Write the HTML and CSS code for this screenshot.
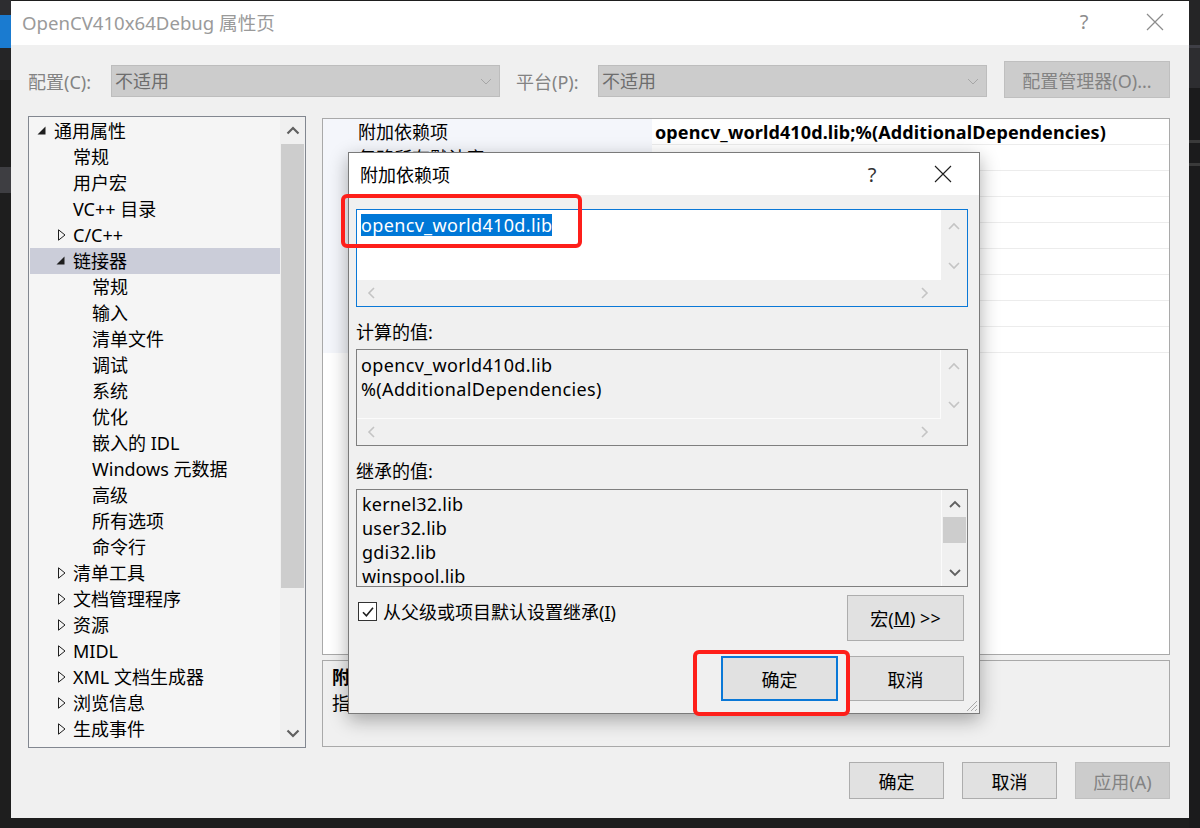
FILE: index.html
```html
<!DOCTYPE html>
<html lang="zh-CN">
<head>
<meta charset="utf-8">
<title>OpenCV410x64Debug 属性页</title>
<link rel="stylesheet" href="styles.css">
</head>
<body>
<div class="screen">
  <div class="edge-left">
    <div class="el-a"></div><div class="el-blue"></div><div class="el-b"></div><div class="el-c"></div><div class="el-grey"></div><div class="el-d"></div>
  </div>

  <div class="window">
    <div class="titlebar">
      <span class="title">OpenCV410x64Debug 属性页</span>
      <span class="tb-help">?</span>
      <span class="tb-close"><svg width="18" height="18" viewBox="0 0 18 18"><path d="M1 1L17 17M17 1L1 17" stroke="#8c8c8c" stroke-width="1.2" fill="none"/></svg></span>
    </div>

    <div class="wbody">
      <div class="config-row">
        <span class="cfg-label">配置(C):</span>
        <div class="combo"><span>不适用</span><svg class="combo-chev" width="12" height="7" viewBox="0 0 12 7"><path d="M1 1L6 6L11 1" stroke="#a6a6a6" stroke-width="1" fill="none"/></svg></div>
        <span class="cfg-label plat">平台(P):</span>
        <div class="combo"><span>不适用</span><svg class="combo-chev" width="12" height="7" viewBox="0 0 12 7"><path d="M1 1L6 6L11 1" stroke="#a6a6a6" stroke-width="1" fill="none"/></svg></div>
        <div class="btn btn-disabled cfg-mgr">配置管理器(O)...</div>
      </div>

      <div class="main">
        <div class="tree">
          <div class="tree-list">
            <div class="row l0"><span class="exp"><svg width="9" height="9" viewBox="0 0 9 9"><path d="M8.5 0.5V8.5H0.5Z" fill="#1e1e1e"/></svg></span>通用属性</div>
            <div class="row l1"><span class="noicon"></span>常规</div>
            <div class="row l1"><span class="noicon"></span>用户宏</div>
            <div class="row l1"><span class="noicon"></span>VC++ 目录</div>
            <div class="row l1"><span class="col"><svg width="8" height="12" viewBox="0 0 8 12"><path d="M0.5 0.8L7 6L0.5 11.2Z" fill="none" stroke="#1e1e1e" stroke-width="1"/></svg></span>C/C++</div>
            <div class="row l1 sel"><span class="exp"><svg width="9" height="9" viewBox="0 0 9 9"><path d="M8.5 0.5V8.5H0.5Z" fill="#1e1e1e"/></svg></span>链接器</div>
            <div class="row l2"><span class="noicon"></span>常规</div>
            <div class="row l2"><span class="noicon"></span>输入</div>
            <div class="row l2"><span class="noicon"></span>清单文件</div>
            <div class="row l2"><span class="noicon"></span>调试</div>
            <div class="row l2"><span class="noicon"></span>系统</div>
            <div class="row l2"><span class="noicon"></span>优化</div>
            <div class="row l2"><span class="noicon"></span>嵌入的 IDL</div>
            <div class="row l2"><span class="noicon"></span>Windows 元数据</div>
            <div class="row l2"><span class="noicon"></span>高级</div>
            <div class="row l2"><span class="noicon"></span>所有选项</div>
            <div class="row l2"><span class="noicon"></span>命令行</div>
            <div class="row l1"><span class="col"><svg width="8" height="12" viewBox="0 0 8 12"><path d="M0.5 0.8L7 6L0.5 11.2Z" fill="none" stroke="#1e1e1e" stroke-width="1"/></svg></span>清单工具</div>
            <div class="row l1"><span class="col"><svg width="8" height="12" viewBox="0 0 8 12"><path d="M0.5 0.8L7 6L0.5 11.2Z" fill="none" stroke="#1e1e1e" stroke-width="1"/></svg></span>文档管理程序</div>
            <div class="row l1"><span class="col"><svg width="8" height="12" viewBox="0 0 8 12"><path d="M0.5 0.8L7 6L0.5 11.2Z" fill="none" stroke="#1e1e1e" stroke-width="1"/></svg></span>资源</div>
            <div class="row l1"><span class="col"><svg width="8" height="12" viewBox="0 0 8 12"><path d="M0.5 0.8L7 6L0.5 11.2Z" fill="none" stroke="#1e1e1e" stroke-width="1"/></svg></span>MIDL</div>
            <div class="row l1"><span class="col"><svg width="8" height="12" viewBox="0 0 8 12"><path d="M0.5 0.8L7 6L0.5 11.2Z" fill="none" stroke="#1e1e1e" stroke-width="1"/></svg></span>XML 文档生成器</div>
            <div class="row l1"><span class="col"><svg width="8" height="12" viewBox="0 0 8 12"><path d="M0.5 0.8L7 6L0.5 11.2Z" fill="none" stroke="#1e1e1e" stroke-width="1"/></svg></span>浏览信息</div>
            <div class="row l1"><span class="col"><svg width="8" height="12" viewBox="0 0 8 12"><path d="M0.5 0.8L7 6L0.5 11.2Z" fill="none" stroke="#1e1e1e" stroke-width="1"/></svg></span>生成事件</div>
          </div>
          <div class="tree-scroll">
            <div class="ts-btn"><svg width="14" height="9" viewBox="0 0 14 9"><path d="M1.5 7.5L7 2L12.5 7.5" stroke="#606060" stroke-width="2.2" fill="none"/></svg></div>
            <div class="ts-thumb"></div>
            <div class="ts-track"></div>
            <div class="ts-btn"><svg width="14" height="9" viewBox="0 0 14 9"><path d="M1.5 1.5L7 7L12.5 1.5" stroke="#606060" stroke-width="2.2" fill="none"/></svg></div>
          </div>
        </div>

        <div class="right">
          <div class="grid">
            <div class="grow"><div class="gname">附加依赖项</div><div class="gval bold">opencv_world410d.lib;%(AdditionalDependencies)</div></div>
            <div class="grow"><div class="gname">忽略所有默认库</div><div class="gval"></div></div>
            <div class="grow"><div class="gname"></div><div class="gval"></div></div>
            <div class="grow"><div class="gname"></div><div class="gval"></div></div>
            <div class="grow"><div class="gname"></div><div class="gval"></div></div>
            <div class="grow"><div class="gname"></div><div class="gval"></div></div>
            <div class="grow"><div class="gname"></div><div class="gval"></div></div>
            <div class="grow"><div class="gname"></div><div class="gval"></div></div>
            <div class="grow"><div class="gname"></div><div class="gval"></div></div>
          </div>
          <div class="desc">
            <div class="desc-title">附加依赖项</div>
            <div class="desc-text">指定要添加到链接命令行的附加项。</div>
          </div>
        </div>
      </div>

      <div class="footer">
        <div class="btn fbtn">确定</div>
        <div class="btn fbtn">取消</div>
        <div class="btn btn-disabled fbtn">应用(A)</div>
      </div>
    </div>

    <div class="dialog">
      <div class="dtitle">
        <span class="dtitle-text">附加依赖项</span>
        <span class="dhelp">?</span>
        <span class="dclose"><svg width="18" height="18" viewBox="0 0 18 18"><path d="M1 1L17 17M17 1L1 17" stroke="#1e1e1e" stroke-width="1.1" fill="none"/></svg></span>
      </div>
      <div class="dbody">
        <div class="edit focus">
          <div class="edit-area white"><span class="hl">opencv_world410d.lib</span></div>
          <div class="vscroll">
            <svg width="12" height="8" viewBox="0 0 12 8"><path d="M1 7L6 2L11 7" stroke="#c4c4c4" stroke-width="1.6" fill="none"/></svg>
            <svg width="12" height="8" viewBox="0 0 12 8"><path d="M1 1L6 6L11 1" stroke="#c4c4c4" stroke-width="1.6" fill="none"/></svg>
          </div>
          <div class="hscroll">
            <svg width="8" height="12" viewBox="0 0 8 12"><path d="M7 1L2 6L7 11" stroke="#c4c4c4" stroke-width="1.6" fill="none"/></svg>
            <svg width="8" height="12" viewBox="0 0 8 12"><path d="M1 1L6 6L1 11" stroke="#c4c4c4" stroke-width="1.6" fill="none"/></svg>
          </div>
          <div class="corner"></div>
        </div>

        <div class="dlabel first">计算的值:</div>
        <div class="edit ro">
          <div class="edit-area grey"><div>opencv_world410d.lib</div><div>%(AdditionalDependencies)</div></div>
          <div class="vscroll">
            <svg width="12" height="8" viewBox="0 0 12 8"><path d="M1 7L6 2L11 7" stroke="#c4c4c4" stroke-width="1.6" fill="none"/></svg>
            <svg width="12" height="8" viewBox="0 0 12 8"><path d="M1 1L6 6L11 1" stroke="#c4c4c4" stroke-width="1.6" fill="none"/></svg>
          </div>
          <div class="hscroll">
            <svg width="8" height="12" viewBox="0 0 8 12"><path d="M7 1L2 6L7 11" stroke="#c4c4c4" stroke-width="1.6" fill="none"/></svg>
            <svg width="8" height="12" viewBox="0 0 8 12"><path d="M1 1L6 6L1 11" stroke="#c4c4c4" stroke-width="1.6" fill="none"/></svg>
          </div>
          <div class="corner"></div>
        </div>

        <div class="dlabel second">继承的值:</div>
        <div class="inherit">
          <div class="inherit-list">
            <div>kernel32.lib</div>
            <div>user32.lib</div>
            <div>gdi32.lib</div>
            <div>winspool.lib</div>
          </div>
          <div class="iscroll">
            <div class="is-btn"><svg width="12" height="8" viewBox="0 0 12 8"><path d="M1 7L6 2L11 7" stroke="#606060" stroke-width="1.8" fill="none"/></svg></div>
            <div class="is-thumb"></div>
            <div class="is-track"></div>
            <div class="is-btn"><svg width="12" height="8" viewBox="0 0 12 8"><path d="M1 1L6 6L11 1" stroke="#606060" stroke-width="1.8" fill="none"/></svg></div>
          </div>
        </div>

        <div class="check-row">
          <span class="checkbox"><svg width="14" height="14" viewBox="0 0 14 14"><path d="M2 7.2L5.4 10.8L12 2.8" stroke="#1e1e1e" stroke-width="1.6" fill="none"/></svg></span>
          <span class="check-label">从父级或项目默认设置继承(<u>I</u>)</span>
          <div class="btn dbtn macro">宏(<u>M</u>)&nbsp;&gt;&gt;</div>
        </div>

        <div class="dfoot">
          <div class="btn dbtn ok">确定</div>
          <div class="btn dbtn">取消</div>
        </div>
      </div>
      <svg class="grip" width="13" height="13" viewBox="0 0 13 13"><path d="M12 2L2 12M12 6L6 12M12 10L10 12" stroke="#a8a8a8" stroke-width="1" fill="none"/></svg>
    </div>

    <div class="mark mark1"></div>
    <div class="mark mark2"></div>
  </div>

  <div class="edge-right">
    <div class="er-a"></div><div class="er-line"></div><div class="er-b"></div><div class="er-c"></div><div class="er-line2"></div><div class="er-d"></div><div class="er-line2"></div><div class="er-e"></div>
  </div>
</div>
</body>
</html>
```

FILE: styles.css
```css
* { box-sizing: border-box; }
html, body { margin: 0; padding: 0; }
body {
  background: #1e1e1e;
  width: 1200px;
  height: 828px;
  overflow: hidden;
  font-family: "Noto Sans", "Noto Sans CJK SC", sans-serif;
  font-size: 18px;
  color: #000;
}
.screen { display: flex; height: 828px; }

/* background editor edges */
.edge-left { width: 11px; display: flex; flex-direction: column; flex: none; }
.el-a { height: 15px; background: #2d2d30; }
.el-blue { height: 33px; background: #1a7bd0; }
.el-b { height: 32px; background: #252526; }
.el-c { height: 87px; background: #1e1e1e; }
.el-grey { height: 26px; background: #3e3e42; }
.el-d { flex: 1; background: #1e1e1e; }

.edge-right { width: 11px; display: flex; flex-direction: column; flex: none; }
.er-a { height: 45px; background: #252526; }
.er-line { height: 3px; background: #3f3f46; }
.er-b { height: 40px; background: #2d2d30; }
.er-c { height: 52px; background: #1b1b1c; }
.er-line2 { height: 3px; background: #3a3a3a; }
.er-d { height: 20px; background: #1b1b1c; }
.er-e { flex: 1; background: #1b1b1c; }

/* main window */
.window {
  width: 1178px;
  height: 817px;
  margin-top: 1px;
  background: #f0f0f0;
  position: relative;
  display: flex;
  flex-direction: column;
  flex: none;
}
.titlebar {
  height: 44px;
  flex: none;
  background: #fff;
  display: flex;
  align-items: center;
  padding-left: 11px;
  padding-right: 25px;
  padding-bottom: 3px;
}
.title { color: #9a9a9a; flex: 1; font-size: 18.6px; }
.tb-help { color: #8c8c8c; font-size: 20px; width: 20px; text-align: center; margin-right: 52px; }
.tb-close { width: 18px; height: 18px; display: flex; }

.wbody { flex: 1; display: flex; flex-direction: column; padding: 16px 19px 0 17px; }

.config-row { height: 37px; display: flex; align-items: flex-start; flex: none; }
.cfg-label { width: 83px; color: #838383; line-height: 26px; margin-top: 8px; }
.cfg-label.plat { width: 82px; margin-left: 16px; }
.combo {
  width: 389px;
  height: 32px;
  margin-top: 4px;
  background: #cccccc;
  border: 1px solid #bdbdbd;
  color: #6d6d6d;
  display: flex;
  align-items: center;
  padding-left: 3px;
  padding-right: 7px;
  line-height: 26px;
}
.combo span { flex: 1; }
.btn {
  display: flex;
  align-items: center;
  justify-content: center;
  background: #e1e1e1;
  border: 1px solid #adadad;
  color: #000;
}
.btn-disabled { background: #cccccc; border-color: #bfbfbf; color: #838383; }
.cfg-mgr { width: 166px; height: 37px; margin-left: auto; }

.main { height: 632px; margin-top: 18px; display: flex; gap: 16px; flex: none; }

/* tree */
.tree {
  width: 278px;
  border: 1px solid #828790;
  background: #f5f5f5;
  display: flex;
}
.tree-list { flex: 1; padding-top: 1px; padding-left: 1px; overflow: hidden; }
.row { height: 26px; line-height: 26px; display: flex; align-items: center; white-space: nowrap; }
.row.l0 { padding-left: 5px; }
.row.l1 { padding-left: 24px; }
.row.l2 { padding-left: 43px; }
.row .exp, .row .col, .row .noicon { width: 19px; height: 26px; display: flex; align-items: center; flex: none; }
.row .exp { padding-left: 2px; padding-bottom: 2px; }
.row .col { padding-left: 4px; }
.row.sel { background: #cbcdd9; }
.tree-scroll { width: 25px; display: flex; flex-direction: column; background: #f0f0f0; }
.ts-btn { height: 27px; display: flex; align-items: center; justify-content: center; flex: none; }
.ts-thumb { height: 444px; background: #cdcdcd; margin: 0 1px; flex: none; }
.ts-track { flex: 1; }

/* right pane */
.right { width: 848px; display: flex; flex-direction: column; }
.grid {
  height: 537px;
  margin-top: 2px;
  border: 1px solid #a9a9a9;
  background: #fff;
  flex: none;
}
.grow { display: flex; height: 26px; }
.gname {
  width: 329px;
  background: #f4f6fb;
  padding-left: 35px;
  line-height: 26px;
  white-space: nowrap;
  overflow: hidden;
}
.gval { flex: 1; border-bottom: 1px solid #ececec; padding-left: 3px; line-height: 26px; white-space: nowrap; overflow: hidden; }
.gval.bold { font-weight: bold; letter-spacing: 0.12px; }
.desc {
  height: 87px;
  margin-top: 5px;
  border: 1px solid #a9a9a9;
  background: #f0f0f0;
  padding: 3px 9px;
  line-height: 26px;
  flex: none;
}
.desc-title { font-weight: bold; }

.footer { margin-top: 14px; display: flex; justify-content: flex-end; gap: 18px; flex: none; }
.fbtn { width: 95px; height: 37px; }

/* dialog */
.dialog {
  position: absolute;
  left: 337px;
  top: 151px;
  width: 632px;
  height: 562px;
  border: 1px solid #7a7a7a;
  background: #f0f0f0;
  box-shadow: 0 6px 18px rgba(0, 0, 0, 0.32);
  display: flex;
  flex-direction: column;
}
.dtitle {
  height: 42px;
  background: #fff;
  display: flex;
  align-items: center;
  padding-left: 11px;
  padding-right: 27px;
  flex: none;
}
.dtitle-text { flex: 1; }
.dhelp { font-size: 20px; color: #333; width: 20px; text-align: center; margin-right: 52px; }
.dclose { width: 18px; height: 18px; display: flex; }

.dbody { padding: 14px 11px 0 7px; display: flex; flex-direction: column; }
.edit {
  height: 98px;
  display: grid;
  grid-template-columns: 1fr 26px;
  grid-template-rows: 1fr 26px;
  flex: none;
}
.edit.focus { border: 1px solid #0a78d7; }
.edit.ro { height: 97px; border: 1px solid #7f7f7f; }
.edit-area { padding: 3px 4px; line-height: 24px; overflow: hidden; white-space: nowrap; letter-spacing: 0.35px; }
.edit-area.white { background: #fff; padding-top: 4px; line-height: 22px; }
.edit-area.grey { border-right: 1px solid #fbfbfb; border-bottom: 1px solid #fbfbfb; }
.hl { background: #0078d7; color: #fff; display: inline-block; line-height: 22px; }
.vscroll {
  background: #f0f0f0;
  display: flex;
  flex-direction: column;
  align-items: center;
  justify-content: space-between;
  padding: 12px 0 10px;
}
.hscroll {
  background: #f0f0f0;
  display: flex;
  align-items: center;
  justify-content: space-between;
  padding: 0 12px 0 10px;
}
.corner { background: #f0f0f0; }

.dlabel { line-height: 24px; flex: none; }
.dlabel.first { margin-top: 13px; margin-bottom: 5px; }
.dlabel.second { margin-top: 13px; margin-bottom: 6px; }

.inherit {
  height: 98px;
  border: 1px solid #7f7f7f;
  display: flex;
  flex: none;
  overflow: hidden;
}
.inherit-list { flex: 1; padding: 2px 5px; line-height: 24px; overflow: hidden; letter-spacing: 0.2px; }
.iscroll { width: 26px; display: flex; flex-direction: column; border-left: 1px solid #fbfbfb; }
.is-btn { height: 27px; display: flex; align-items: center; justify-content: center; flex: none; }
.is-thumb { height: 26px; background: #cdcdcd; margin: 0 1px; flex: none; }
.is-track { flex: 1; }

.check-row { margin-top: 8px; height: 46px; display: flex; align-items: flex-start; margin-right: 4px; flex: none; }
.checkbox {
  width: 19px;
  height: 19px;
  margin-top: 7px;
  margin-left: 2px;
  background: #fff;
  border: 1px solid #333;
  display: flex;
  align-items: center;
  justify-content: center;
}
.check-label { margin-left: 6px; line-height: 26px; margin-top: 4px; }
.dbtn { width: 117px; }
.macro { height: 46px; margin-left: auto; }
.dfoot { margin-top: 15px; display: flex; justify-content: flex-end; gap: 9px; margin-right: 4px; flex: none; }
.dfoot .dbtn { height: 45px; }
.dfoot .ok { border: 2px solid #0a78d7; }
.grip { position: absolute; right: 1px; bottom: 1px; }

/* red annotation marks */
.mark { position: absolute; border: 4px solid #fe1f1a; border-radius: 6px; }
.mark1 { left: 330px; top: 193px; width: 241px; height: 54px; }
.mark2 { left: 682px; top: 649px; width: 157px; height: 66px; }
```
